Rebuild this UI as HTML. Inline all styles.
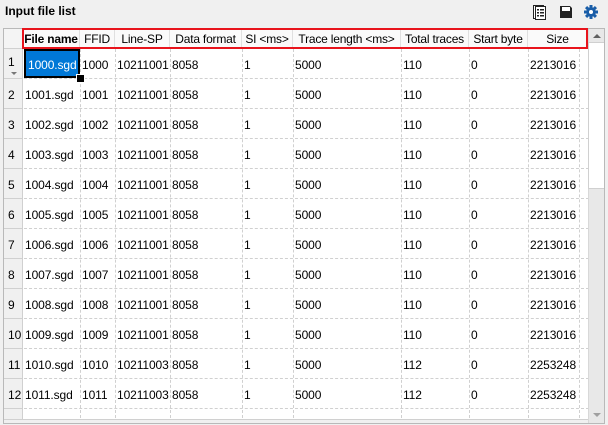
<!DOCTYPE html>
<html><head><style>
body{margin:0;width:608px;height:425px;background:#f0f0f0;font-family:"Liberation Sans",sans-serif;font-size:12px;color:#000;position:relative;overflow:hidden}
.t{position:absolute;left:5px;top:4px;font-weight:bold;font-size:12px}
.frame{position:absolute;left:3px;top:28px;width:602px;height:396px;background:#fff;border:1px solid #b9b9b9;box-sizing:border-box;overflow:hidden}
.c{position:absolute;white-space:nowrap;letter-spacing:-0.1px}
.vl{position:absolute;top:20px;bottom:0;border-left:1px dashed #d0d0d0}
.hl{position:absolute;left:20px;width:565px;border-top:1px dashed #d0d0d0}
.rh{position:absolute;left:0;width:19px;background:#f0f0f0;border-right:1px solid #d0d0d0;border-bottom:1px solid #d0d0d0;font-size:12px;padding-left:4px;box-sizing:border-box}
.hd{position:absolute;top:0;height:20px;line-height:20px;text-align:center;border-right:1px solid #e0e0e0;border-bottom:1px solid #d8d8d8;box-sizing:border-box;letter-spacing:-0.2px;background:#fafafa}
</style></head><body>
<div class="t">Input file list</div>
<svg style="position:absolute;left:532px;top:5px" width="14" height="15" viewBox="0 0 14 15"><rect x="1.5" y="0.5" width="10" height="13" fill="#fff" stroke="#222"/><rect x="3.5" y="1.5" width="10" height="13" fill="#fff" stroke="#222"/><g fill="#222"><rect x="5" y="4" width="2" height="1.5"/><rect x="8" y="4" width="4" height="1.5"/><rect x="5" y="7" width="2" height="1.5"/><rect x="8" y="7" width="4" height="1.5"/><rect x="5" y="10" width="2" height="1.5"/><rect x="8" y="10" width="4" height="1.5"/></g></svg>
<svg style="position:absolute;left:560px;top:6px" width="12" height="12" viewBox="0 0 12 12"><path d="M0 0H10L12 2V12H0Z" fill="#222"/><rect x="2" y="1" width="8" height="4" fill="#fff"/></svg>
<svg style="position:absolute;left:584px;top:5px" width="14" height="14" viewBox="-7 -7 14 14"><g fill="#1a5ea8"><circle r="4.8"/><g id="k"><rect x="-1.5" y="-7" width="3" height="14"/></g><use href="#k" transform="rotate(45)"/><use href="#k" transform="rotate(90)"/><use href="#k" transform="rotate(135)"/></g><circle r="2" fill="#fff"/></svg>
<div class="frame">
<div class="rh" style="top:0;height:20px;background:#f4f4f4"></div>
<div class="hd" style="left:19px;width:57px;font-weight:bold">File name</div>
<div class="hd" style="left:76px;width:35px">FFID</div>
<div class="hd" style="left:111px;width:55px">Line-SP</div>
<div class="hd" style="left:166px;width:72px">Data format</div>
<div class="hd" style="left:238px;width:51px">SI &lt;ms&gt;</div>
<div class="hd" style="left:289px;width:108px">Trace length &lt;ms&gt;</div>
<div class="hd" style="left:397px;width:68px">Total traces</div>
<div class="hd" style="left:465px;width:59px">Start byte</div>
<div class="hd" style="left:524px;width:60px">Size</div>
<div class="vl" style="left:76px"></div><div class="vl" style="left:111px"></div><div class="vl" style="left:166px"></div><div class="vl" style="left:238px"></div><div class="vl" style="left:289px"></div><div class="vl" style="left:397px"></div><div class="vl" style="left:465px"></div><div class="vl" style="left:524px"></div><div class="vl" style="left:575px"></div>
<div id="rows"></div>
<div style="position:absolute;left:20px;top:20px;width:56px;height:29px;background:#0078d7;border:2px solid #000;box-sizing:border-box"></div>
<div class="c" style="left:24px;top:29px;color:#fff">1000.sgd</div>
<div style="position:absolute;left:72px;top:45px;width:7px;height:7px;background:#000;border:1px solid #fff"></div>
<div style="position:absolute;left:7px;top:43px;width:0;height:0;border:3px solid transparent;border-top-color:#777;border-bottom:0"></div>
<div style="position:absolute;left:584px;top:0;width:17px;height:394px;background:#e8e8e8;border-left:1px solid #d8d8d8;box-sizing:border-box"></div>
<div style="position:absolute;left:584px;top:13px;width:17px;height:147px;background:#fff;border:1px solid #d0d0d0;box-sizing:border-box"></div>
<div style="position:absolute;left:589px;top:5px;width:0;height:0;border:4px solid transparent;border-bottom-color:#606060;border-top:0"></div>
<div style="position:absolute;left:589px;top:384px;width:0;height:0;border:4px solid transparent;border-top-color:#a0a0a0;border-bottom:0"></div>
<div style="position:absolute;left:0;top:390px;width:584px;height:6px;background:#f0f0f0;border-top:1px solid #d0d0d0"></div>
<div style="position:absolute;left:0;top:0;width:0;height:0"></div>
</div>
<div style="position:absolute;left:22px;top:28px;width:566px;height:21px;border:2px solid #e8141c;box-sizing:border-box"></div>
<script>
var h='',cols=[21,78,113,168,240,291,399,467,526];
for(var i=0;i<13;i++){var y=20+i*30,f=1000+i,l=i<10?'10211001':'10211003',tr=i<10?'110':'112',sz=i<10?'2213016':'2253248';
h+='<div class="rh" style="top:'+y+'px;height:30px;line-height:'+(i==0?'26':'32')+'px">'+(i+1)+'</div>';
h+='<div class="hl" style="top:'+(y+29)+'px"></div>';
var v=[i==0?'':f+'.sgd',f,l,'8058','1','5000',tr,'0',sz];
for(var j=0;j<9;j++)h+='<div class="c" style="left:'+cols[j]+'px;top:'+(y+9)+'px">'+v[j]+'</div>';}
document.getElementById('rows').innerHTML=h;
</script>
</body></html>
